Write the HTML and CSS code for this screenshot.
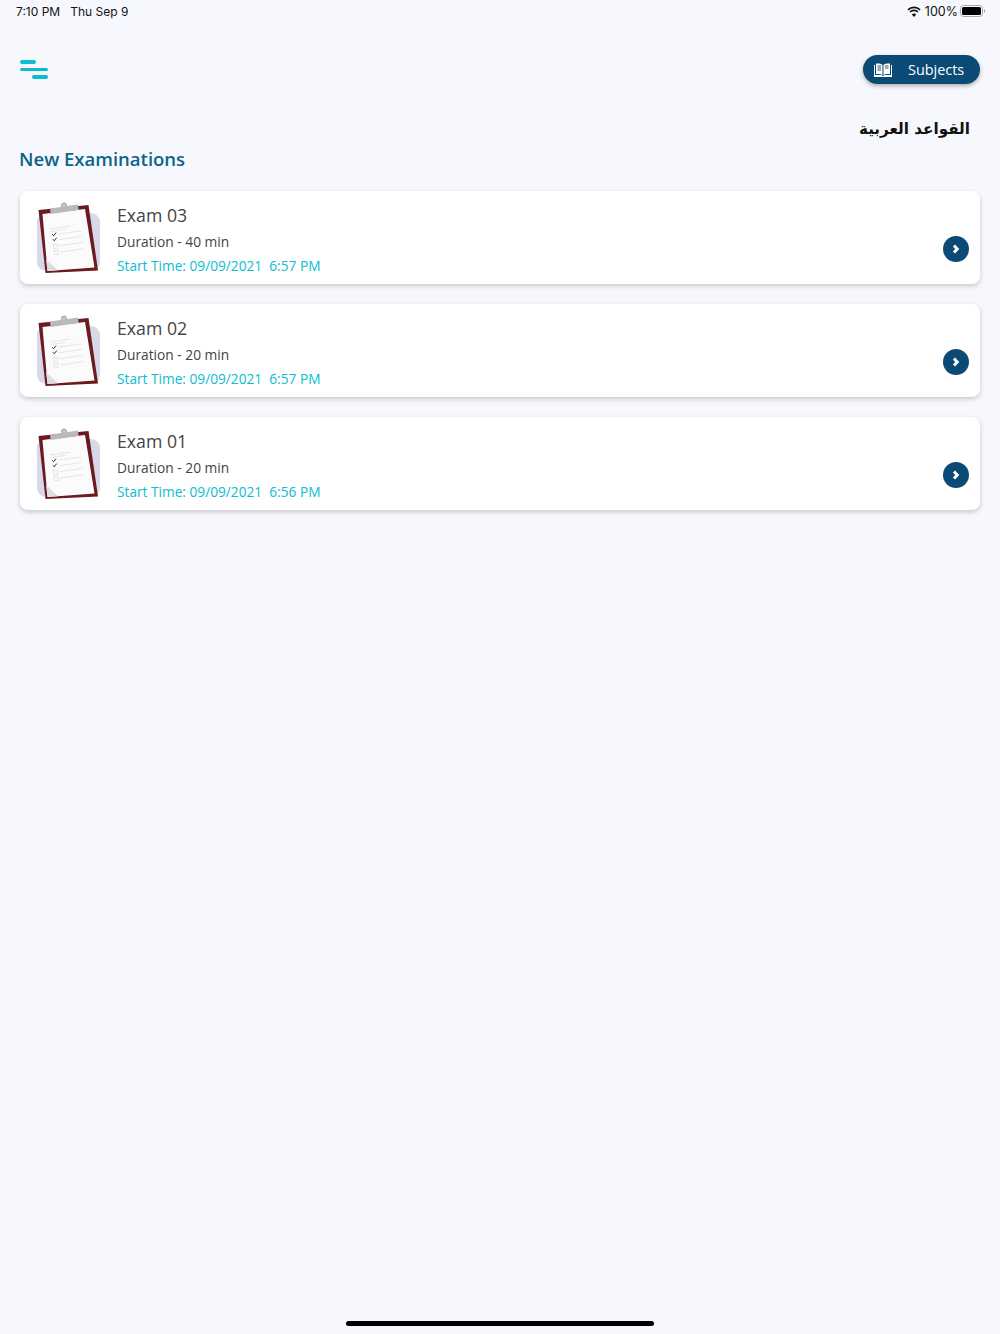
FILE: index.html
```html
<!DOCTYPE html>
<html lang="en">
<head>
    <meta charset="UTF-8">
    <meta name="viewport" content="width=device-width, initial-scale=1.0">
    <title>Examinations</title>
    <link rel="stylesheet" href="styles.css">
</head>
<body>
    <svg class="defs" width="0" height="0">
        <symbol id="clipboard" viewBox="0 0 64 72">
            <rect x="0" y="11" width="63" height="58" rx="9" fill="#d9d7ea"/>
            <polygon points="1.500,8 51.500,3 61,68.500 8.500,71" fill="#6b1a1f"/>
            <polygon points="5.500,12 48,7 57.500,65.500 10.500,69" fill="#fbfbfb"/>
            <polygon points="10.500,69 9,57 21,68.200" fill="#dedede"/>
            <circle cx="27" cy="3.500" r="3" fill="#b5b5b5"/>
            <polygon points="13,6.500 41,2.500 41.500,8 13.700,12" fill="#b9b9b9"/>
            <circle cx="27" cy="3.500" r="1" fill="#e6dd9a"/>
            <g fill="none" stroke="#dcdee2" stroke-width="0.800">
                <path d="M13 27 L33 24 M13.400 29.500 L28 27.400"/>
                <path d="M21.300 32 L44 29 M22.300 37.700 L44.700 34.300 M23 43.700 L45.700 40.300 M23.700 50 L46.300 46.700"/>
                <rect x="16.500" y="42.500" width="4" height="4"/>
                <rect x="17.200" y="48.500" width="4" height="4"/>
            </g>
            <path d="M15.200 32.200 L16.600 33.800 L19 30.600 M15.900 37.200 L17.300 38.800 L19.700 35.600" fill="none" stroke="#333" stroke-width="1"/>
        </symbol>
    </svg>

    <div class="status-bar">
        <div class="status-left"><span>7:10 PM</span><span>Thu Sep 9</span></div>
        <div class="status-right">
            <svg class="wifi" width="14" height="11" viewBox="0 0 14 11">
                <path d="M7 11 L4.800 8.400 A3.300 3.300 0 0 1 9.200 8.400 Z" fill="#111"/>
                <path d="M1 3.800 A8.600 8.600 0 0 1 13 3.800 M3 6 A5.700 5.700 0 0 1 11 6" fill="none" stroke="#111" stroke-width="1.700"/>
            </svg>
            <span class="battery-level">100%</span>
            <svg class="battery" width="26" height="12" viewBox="0 0 26 12">
                <rect x="0.500" y="0.500" width="22" height="11" rx="3" fill="none" stroke="#a8a8a8"/>
                <rect x="2" y="2" width="19" height="8" rx="1.600" fill="#000"/>
                <path d="M24 4 A2.200 2.200 0 0 1 24 8 Z" fill="#a8a8a8"/>
            </svg>
        </div>
    </div>

    <header class="top-bar">
        <button class="menu-btn" aria-label="Menu">
            <span class="menu-line short"></span>
            <span class="menu-line"></span>
            <span class="menu-line short right"></span>
        </button>
        <button class="subjects-btn">
            <svg width="18" height="14" viewBox="0 0 18 14">
                <path d="M0 2 H1 V12 H7.500 L9 13 L10.500 12 H17 V2 H18 V14 H0 Z" fill="#fff"/>
                <path d="M2 0.500 C4.500 0.300 7 0.600 8.500 1.800 V12 C7 11 4.500 10.700 2 11 Z" fill="#fff"/>
                <path d="M16 0.500 C13.500 0.300 11 0.600 9.500 1.800 V12 C11 11 13.500 10.700 16 11 Z" fill="#fff"/>
                <path d="M3.500 3 H7 M3.500 5 H7 M3.500 7 H7 M11 3 H14.500 M11 5 H14.500" stroke="#0b4a75" stroke-width="0.900"/>
            </svg>
            <span>Subjects</span>
        </button>
    </header>

    <main class="content">
        <div class="subject-name" lang="ar" dir="rtl">القواعد العربية</div>
        <h2 class="section-title">New Examinations</h2>

        <div class="exam-list">
            <div class="exam-card">
                <svg class="exam-icon" width="64" height="72"><use href="#clipboard"/></svg>
                <div class="exam-info">
                    <div class="exam-name">Exam 03</div>
                    <div class="exam-duration">Duration - 40 min</div>
                    <div class="exam-start">Start Time: 09/09/2021&nbsp; 6:57 PM</div>
                </div>
                <span class="exam-arrow">
                    <svg width="8" height="10" viewBox="0 0 8 10"><path d="M2 1.500 L5.200 5 L2 8.500" fill="none" stroke="#fff" stroke-width="3"/></svg>
                </span>
            </div>
            <div class="exam-card">
                <svg class="exam-icon" width="64" height="72"><use href="#clipboard"/></svg>
                <div class="exam-info">
                    <div class="exam-name">Exam 02</div>
                    <div class="exam-duration">Duration - 20 min</div>
                    <div class="exam-start">Start Time: 09/09/2021&nbsp; 6:57 PM</div>
                </div>
                <span class="exam-arrow">
                    <svg width="8" height="10" viewBox="0 0 8 10"><path d="M2 1.500 L5.200 5 L2 8.500" fill="none" stroke="#fff" stroke-width="3"/></svg>
                </span>
            </div>
            <div class="exam-card">
                <svg class="exam-icon" width="64" height="72"><use href="#clipboard"/></svg>
                <div class="exam-info">
                    <div class="exam-name">Exam 01</div>
                    <div class="exam-duration">Duration - 20 min</div>
                    <div class="exam-start">Start Time: 09/09/2021&nbsp; 6:56 PM</div>
                </div>
                <span class="exam-arrow">
                    <svg width="8" height="10" viewBox="0 0 8 10"><path d="M2 1.500 L5.200 5 L2 8.500" fill="none" stroke="#fff" stroke-width="3"/></svg>
                </span>
            </div>
        </div>
    </main>

    <div class="home-indicator"></div>
</body>
</html>
```

FILE: styles.css
```css
html, body {
    margin: 0;
    height: 1334px;
    overflow: hidden;
}
body {
    position: relative;
    font-family: 'Open Sans', sans-serif;
    background: #f7f8fd;
    color: #444;
}
.defs {
    position: absolute;
}
.status-bar {
    display: flex;
    justify-content: space-between;
    align-items: center;
    height: 22px;
    padding: 0 14px 2px 16px;
    font-family: 'Inter', sans-serif;
    font-size: 12px;
    color: #111;
}
.status-left {
    display: flex;
    gap: 10px;
}
.status-right {
    display: flex;
    align-items: center;
    gap: 4px;
}
.battery-level {
    font-size: 12.500px;
}
.battery {
    margin-left: -2px;
}
.top-bar {
    display: flex;
    justify-content: space-between;
    align-items: center;
    padding: 31px 20px 0;
}
.menu-btn {
    display: flex;
    flex-direction: column;
    gap: 4px;
    width: 28px;
    padding: 0;
    border: none;
    background: none;
}
.menu-line {
    display: block;
    width: 28px;
    height: 3.500px;
    border-radius: 2px;
    background: #0dbccf;
}
.menu-line.short {
    width: 16px;
}
.menu-line.right {
    align-self: flex-end;
}
.subjects-btn {
    display: flex;
    align-items: center;
    gap: 16px;
    width: 117px;
    height: 29px;
    padding: 0 0 0 11px;
    border: none;
    border-radius: 15px;
    background: #0b4a75;
    color: #fff;
    font-family: inherit;
    font-size: 14.400px;
    box-shadow: 0 2px 4px rgba(0, 0, 0, 0.3);
}
.content {
    padding: 0 20px;
}
.subject-name {
    margin-top: 33px;
    padding-right: 10px;
    font-family: 'DejaVu Sans', sans-serif;
    font-size: 15.200px;
    font-weight: bold;
    line-height: 24px;
    color: #111;
}
.section-title {
    margin: 5px 0 18.600px -1px;
    font-size: 18.500px;
    font-weight: 600;
    line-height: 26px;
    color: #0b6489;
}
.exam-list {
    display: flex;
    flex-direction: column;
    gap: 20px;
}
.exam-card {
    display: flex;
    height: 93px;
    box-sizing: border-box;
    padding: 11px 11px 0 17px;
    border-radius: 8px;
    background: #fff;
    box-shadow: 0 2px 5px rgba(0, 0, 0, 0.2);
}
.exam-icon {
    flex: none;
}
.exam-info {
    flex: 1;
    margin-left: 16px;
}
.exam-name {
    font-size: 17.700px;
    line-height: 26px;
}
.exam-duration {
    margin-top: 2px;
    font-size: 13.750px;
    line-height: 24px;
}
.exam-start {
    font-size: 13.700px;
    line-height: 24px;
    color: #0dbccf;
}
.exam-arrow {
    display: flex;
    align-items: center;
    justify-content: center;
    width: 26px;
    height: 26px;
    margin-top: 34px;
    border-radius: 50%;
    background: #0b4a75;
}
.home-indicator {
    position: absolute;
    left: 346px;
    bottom: 8px;
    width: 308px;
    height: 5px;
    border-radius: 3px;
    background: #000;
}
```
